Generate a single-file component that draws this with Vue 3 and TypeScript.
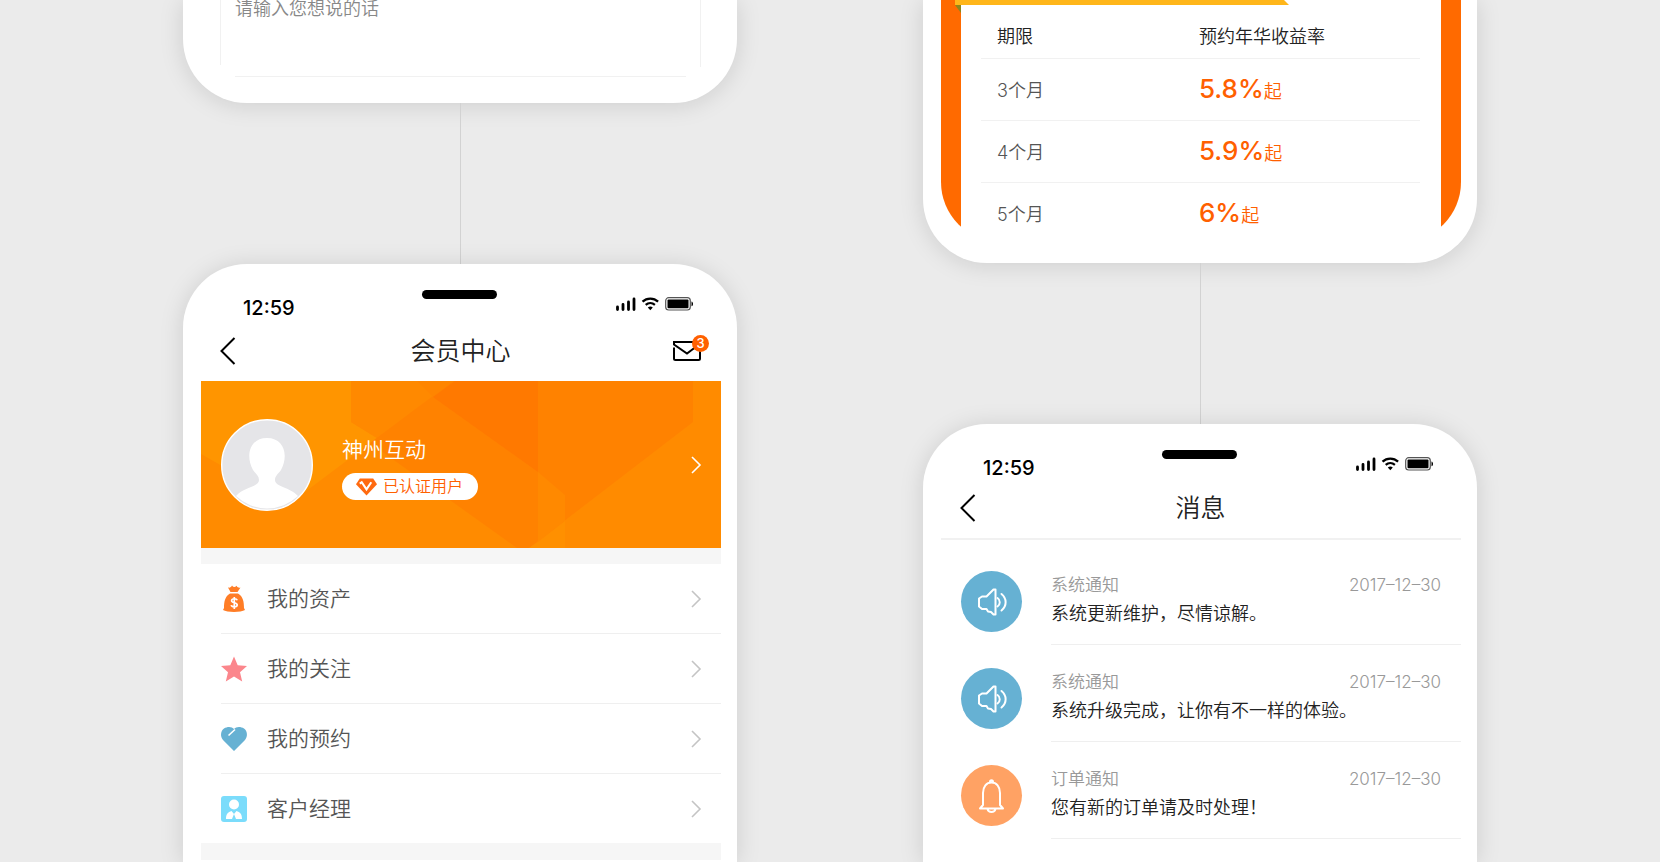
<script setup lang="ts">
interface Rate { term: string; value: string }
interface MenuItem { label: string; icon: 'bag' | 'star' | 'heart' | 'manager' }
interface Message { kind: 'system' | 'order'; title: string; text: string; date: string }

const rates: Rate[] = [
  { term: '3个月', value: '5.8%' },
  { term: '4个月', value: '5.9%' },
  { term: '5个月', value: '6%' },
]

const menu: MenuItem[] = [
  { label: '我的资产', icon: 'bag' },
  { label: '我的关注', icon: 'star' },
  { label: '我的预约', icon: 'heart' },
  { label: '客户经理', icon: 'manager' },
]

const messages: Message[] = [
  { kind: 'system', title: '系统通知', text: '系统更新维护，尽情谅解。', date: '2017–12–30' },
  { kind: 'system', title: '系统通知', text: '系统升级完成，让你有不一样的体验。', date: '2017–12–30' },
  { kind: 'order', title: '订单通知', text: '您有新的订单请及时处理！', date: '2017–12–30' },
]
</script>

<template>
  <main class="board">
    <div class="column">
      <section class="phone phone-end">
        <form class="feedback" @submit.prevent>
          <textarea class="feedback-box" aria-label="留言" placeholder="请输入您想说的话"></textarea>
        </form>
      </section>
      <div class="connector"></div>
      <section class="phone phone-start">
        <div class="status">
          <span class="clock">12:59</span>
          <span class="speaker"></span>
          <svg class="status-icons" viewBox="0 0 78 14" aria-hidden="true">
            <path d="M1.500 10v2.500M7 7.500v5M12.500 5v7.500M18 2v10.500" stroke="#000" stroke-width="2.800" stroke-linecap="round" fill="none" />
            <path d="M26.500 4.600a11.500 11.500 0 0 1 15.600 0M29.700 7.900a7 7 0 0 1 9.200 0" stroke="#000" stroke-width="2.200" fill="none" />
            <path d="M31.800 10.600a4 4 0 0 1 5 0l-2.500 2.700z" />
            <rect x="49.700" y=".7" width="24.600" height="12.300" rx="3" fill="none" stroke="#555" stroke-width="1.200" />
            <rect x="51.500" y="2.500" width="21" height="8.700" rx="1" />
            <path d="M75.500 4.500c2 .6 2 4.200 0 4.800z" />
          </svg>
        </div>
        <header class="navbar navbar-member">
          <button class="back" type="button" aria-label="返回">
            <svg viewBox="0 0 16 28"><path d="M14.500 1 1.500 14l13 13" /></svg>
          </button>
          <h1>会员中心</h1>
          <button class="mail" type="button" aria-label="消息">
            <svg viewBox="0 0 28 20"><path d="M1 6.500v11a1.500 1.500 0 0 0 1.500 1.500h23a1.500 1.500 0 0 0 1.500-1.500V2.500A1.500 1.500 0 0 0 25.500 1H1v2.500L14 12.500l8-6" /></svg>
            <span class="count">3</span>
          </button>
        </header>
        <a class="profile" href="#profile">
          <svg class="profile-art" viewBox="0 0 520 167" preserveAspectRatio="none" aria-hidden="true">
            <path fill="#ff8b00" d="M0 0h520v167H0z" />
            <path fill="#ff9500" d="M0 0h150v41l26 16-88 66L0 73z" />
            <path fill="#ff8900" d="M150 0h102l-76 57-26-16z" />
            <path fill="#ff8200" d="M252 0h240v41L328 167h-12L169 62z" />
            <path fill="#ff8500" d="M216 0h36l-20 16z" />
            <path fill="#ff7900" d="M232 16 254 0h83v91z" />
            <path fill="#ff8900" d="m337 91 27 23v26l-27 21z" />
            <path fill="#ff9000" d="m337 161 27-21v27h-36z" />
          </svg>
          <svg class="avatar" viewBox="0 0 92 92" aria-hidden="true">
            <circle cx="46" cy="46" r="45.300" fill="#e5e5e8" stroke="#fff" stroke-width="1.400" />
            <path fill="#fff" d="M15 77c8-9 23-9 23-16 0-4-3-6-6-10-8-15-3-32 14-32s22 17 14 32c-3 4-6 6-6 10 0 7 15 7 23 16a45 45 0 0 1-62 0z" />
          </svg>
          <span class="identity">
            <strong>神州互动</strong>
            <span class="verified">
              <svg viewBox="0 0 22 18" aria-hidden="true">
                <path fill="#ff6a10" d="M4 0h14l4 6-11 12L0 6z" />
                <path d="m4 5.500 2-1.500 5 7.500 5-7.500" fill="none" stroke="#fff" stroke-width="2.200" />
              </svg>
              已认证用户
            </span>
          </span>
          <svg class="chevron" viewBox="0 0 10 18" aria-hidden="true"><path d="m1 1 8 8-8 8" /></svg>
        </a>
        <ul class="menu">
          <li v-for="item in menu" :key="item.label">
            <a href="#menu">
              <svg class="menu-icon" viewBox="0 0 26 26" aria-hidden="true">
                <g v-if="item.icon === 'bag'">
                  <path fill="#ff7d26" d="M7 1.500c2 .5 3-.2 4-2 1.500 2 3 2 4.500.2C16.500 1.500 18 2 19.500 1.500L16.500 6h-7z" />
                  <path fill="#ff7d26" d="M9 7.500h8c5 3 6 8 6 14.500l1 2c-4 2.500-18 2.500-22 0l1-2C3 15.500 4 10.500 9 7.500z" />
                  <path d="M16.200 14.300c-.6-2-5.400-2.200-5.600.3-.2 2.800 5.700 1.500 5.600 4.400-.2 2.600-5.500 2.400-6 .1M13.300 11v12" stroke="#fff" stroke-width="1.700" fill="none" />
                </g>
                <path v-else-if="item.icon === 'star'" fill="#fb868c" d="m13 .5 3.700 8.700 9.300.8-7 6.200 2.200 9.300-8.200-4.900-8.200 4.900L7 16.200 0 10l9.300-.8z" />
                <g v-else-if="item.icon === 'heart'">
                  <path fill="#66b1d3" d="M13 25 2 14C-1 10.500-.5 5 3 2.500 6.500.2 11 .5 13 3c2-2.500 6.500-2.800 10-.5 3.500 2.500 4 8 1 11.500z" />
                  <path d="m7.500 9.500 6.500-6" stroke="#fff" stroke-width="1.600" fill="none" />
                </g>
                <g v-else>
                  <rect width="26" height="26" rx="3" fill="#7bdcfb" />
                  <circle cx="13" cy="8.500" r="5" fill="#fff" />
                  <path fill="#fff" d="M5 23c0-5 2-7 5.500-8l2.500 3 2.500-3c3.500 1 5.500 3 5.500 8h-6l-2-5-2 5z" />
                </g>
              </svg>
              <span class="menu-label">{{ item.label }}</span>
              <svg class="chevron" viewBox="0 0 10 18" aria-hidden="true"><path d="m1 1 8 8-8 8" /></svg>
            </a>
          </li>
        </ul>
      </section>
    </div>

    <div class="column">
      <section class="phone phone-end">
        <div class="offer">
          <div class="offer-card">
            <svg class="ribbon" viewBox="0 0 334 13" aria-hidden="true">
              <path fill="#ffb61a" d="M0 0h329l5 5H0z" />
              <path fill="#8e861c" d="M0 5h6v8z" />
            </svg>
            <table class="rates">
              <thead>
                <tr><th class="term" scope="col">期限</th><th scope="col">预约年华收益率</th></tr>
              </thead>
              <tbody>
                <tr v-for="rate in rates" :key="rate.term">
                  <td>{{ rate.term }}</td>
                  <td class="rate"><b>{{ rate.value }}</b>起</td>
                </tr>
              </tbody>
            </table>
          </div>
        </div>
      </section>
      <div class="connector"></div>
      <section class="phone phone-start">
        <div class="status">
          <span class="clock">12:59</span>
          <span class="speaker"></span>
          <svg class="status-icons" viewBox="0 0 78 14" aria-hidden="true">
            <path d="M1.500 10v2.500M7 7.500v5M12.500 5v7.500M18 2v10.500" stroke="#000" stroke-width="2.800" stroke-linecap="round" fill="none" />
            <path d="M26.500 4.600a11.500 11.500 0 0 1 15.600 0M29.700 7.900a7 7 0 0 1 9.200 0" stroke="#000" stroke-width="2.200" fill="none" />
            <path d="M31.800 10.600a4 4 0 0 1 5 0l-2.500 2.700z" />
            <rect x="49.700" y=".7" width="24.600" height="12.300" rx="3" fill="none" stroke="#555" stroke-width="1.200" />
            <rect x="51.500" y="2.500" width="21" height="8.700" rx="1" />
            <path d="M75.500 4.500c2 .6 2 4.200 0 4.800z" />
          </svg>
        </div>
        <header class="navbar navbar-messages">
          <button class="back" type="button" aria-label="返回">
            <svg viewBox="0 0 16 28"><path d="M14.500 1 1.500 14l13 13" /></svg>
          </button>
          <h1>消息</h1>
        </header>
        <ul class="messages">
          <li v-for="(message, index) in messages" :key="index">
            <span class="message-icon" :class="message.kind">
              <svg v-if="message.kind === 'system'" viewBox="0 0 30 28" aria-hidden="true">
                <path d="M18.500 1.500v25h-2L14 24l-3-.5-1.500-2.500H5L2 18.500v-8L5 8.500h4.500l7-7z" />
                <path d="M20.500 10c3 2 3 6.500 0 8.500M24.500 6c5.500 4.500 5.500 12 0 16.500" />
              </svg>
              <svg v-else viewBox="0 0 26 36" aria-hidden="true">
                <path d="M4 27V15C4 8.500 7.500 4.500 12.500 4.500S21 8.500 21 15v12l3 3.500H1zM11 4c0-2.500 3-2.500 3 0M8.500 31c1 4 7 4 8 0" />
              </svg>
            </span>
            <div class="message-body">
              <div class="message-head">
                <h2>{{ message.title }}</h2>
                <time datetime="2017-12-30">{{ message.date }}</time>
              </div>
              <p>{{ message.text }}</p>
            </div>
          </li>
        </ul>
      </section>
    </div>
  </main>
</template>

<style>
body {
  background: #ebebeb;
}
</style>

<style scoped>
.board {
  box-sizing: border-box;
  display: grid;
  grid-template-columns: repeat(2, 1fr);
  height: 100vh;
  padding: 0 90px;
  overflow: hidden;
  background: #ebebeb;
  color: #222;
  font-family: Inter, "Noto Sans CJK SC", sans-serif;
  font-weight: 350;
}
.column {
  display: flex;
  flex-direction: column;
  align-items: center;
}
.phone {
  box-sizing: border-box;
  width: 100%;
  max-width: 554px;
  padding: 0 16px 0 18px;
  background: #fff;
  box-shadow: 0 2px 24px rgba(0, 0, 0, 0.13);
}
.phone-end {
  border-radius: 0 0 64px 64px;
}
.phone-start {
  flex: 1 0 auto;
  border-radius: 64px 64px 0 0;
}
.connector {
  flex: none;
  width: 1px;
  height: 161px;
  background: #d2d2d2;
}
button {
  padding: 0;
  border: 0;
  background: none;
  cursor: pointer;
}
svg {
  display: block;
  overflow: visible;
}
a {
  color: inherit;
  text-decoration: none;
}
ul {
  margin: 0;
  padding: 0;
  list-style: none;
}
h1, h2, p {
  margin: 0;
  font-weight: 350;
}

.feedback {
  padding: 0 20px 26px 19px;
}
.feedback-box {
  box-sizing: border-box;
  display: block;
  width: 100%;
  height: 77px;
  padding: 0 15px;
  border: 0;
  outline: 0;
  resize: none;
  background:
    linear-gradient(#f1f1f1, #f1f1f1) 0 0 / 1px 65px no-repeat,
    linear-gradient(#f1f1f1, #f1f1f1) 100% 0 / 1px 67px no-repeat,
    linear-gradient(#f1f1f1, #f1f1f1) 50% 100% / calc(100% - 30px) 1px no-repeat;
  font: inherit;
  font-size: 18px;
  line-height: 18px;
}
.feedback-box::placeholder {
  color: #888;
  opacity: 1;
}

.status {
  position: relative;
  display: flex;
  justify-content: space-between;
  height: 60px;
  padding: 0 27px 0 42px;
}
.clock {
  padding-top: 32px;
  color: #000;
  font-size: 20px;
  font-weight: 500;
  line-height: 24px;
}
.speaker {
  position: absolute;
  top: 26px;
  left: 50%;
  width: 75px;
  height: 9px;
  margin-left: -39px;
  border-radius: 5px;
  background: #000;
}
.status-icons {
  width: 78px;
  height: 14px;
  margin-top: 33px;
}
.navbar {
  display: grid;
  grid-template-columns: 1fr auto 1fr;
  align-items: center;
  padding: 0 20px 0 19px;
}
.navbar-member {
  height: 54px;
  padding-bottom: 3px;
}
.navbar-messages {
  height: 48px;
  padding-bottom: 6px;
  border-bottom: 2px solid #f1f1f1;
}
.navbar h1 {
  font-size: 25px;
  line-height: 36px;
}
.back svg {
  width: 16px;
  height: 28px;
}
.back path,
.mail path {
  fill: none;
  stroke: #000;
  stroke-width: 2;
}
.back {
  justify-self: start;
}
.mail {
  position: relative;
  justify-self: end;
}
.mail svg {
  width: 28px;
  height: 20px;
}
.count {
  position: absolute;
  top: -6px;
  right: -8px;
  width: 17px;
  height: 17px;
  border-radius: 50%;
  background: #ff6000;
  color: #fff;
  font: 500 13px/17px Inter, sans-serif;
  text-align: center;
}

.profile {
  position: relative;
  display: flex;
  align-items: center;
  height: 167px;
  padding: 0 20px;
  color: #fff;
}
.profile-art {
  position: absolute;
  inset: 0;
  width: 100%;
  height: 100%;
}
.avatar {
  position: relative;
  flex: none;
  width: 92px;
  height: 92px;
}
.identity {
  position: relative;
  flex: 1;
  display: flex;
  flex-direction: column;
  align-items: flex-start;
  gap: 8px;
  margin-left: 29px;
  padding-top: 6px;
}
.identity strong {
  font-size: 21px;
  font-weight: 350;
  line-height: 30px;
}
.verified {
  display: flex;
  align-items: center;
  gap: 6px;
  padding: 0 15px 0 14px;
  border-radius: 14px;
  background: #fff;
  color: #ff6000;
  font-size: 16px;
  line-height: 27px;
}
.verified svg {
  width: 21px;
  height: 18px;
}
.chevron {
  position: relative;
  flex: none;
  width: 10px;
  height: 18px;
  fill: none;
  stroke: currentColor;
  stroke-width: 1.600;
}

.menu {
  border: solid #f6f6f6;
  border-width: 16px 0 17px;
}
.menu li {
  margin-left: 20px;
}
.menu li + li {
  border-top: 1px solid #efefef;
}
.menu a {
  display: flex;
  align-items: center;
  height: 69px;
  padding-right: 20px;
  color: #555;
}
.menu-icon {
  width: 26px;
  height: 26px;
}
.menu-label {
  flex: 1;
  margin-left: 20px;
  font-size: 21px;
  line-height: 30px;
}
.menu .chevron {
  color: #c4c4c4;
}

.offer {
  height: 242px;
  margin-bottom: 21px;
  padding: 0 20px;
  border-radius: 0 0 60px 60px;
  background: #ff6a00;
}
.offer-card {
  position: relative;
  height: 100%;
  padding: 0 21px 0 20px;
  background: #fff;
}
.ribbon {
  position: absolute;
  top: 0;
  left: -6px;
  width: 334px;
  height: 13px;
}
.rates {
  width: 100%;
  border-collapse: collapse;
  table-layout: fixed;
  font-size: 18px;
  text-align: left;
}
.rates th,
.rates td {
  height: 62px;
  box-sizing: border-box;
  padding: 3px 0 0 16px;
  line-height: 26px;
}
.rates th {
  height: 58px;
  padding-top: 16px;
  font-weight: 350;
}
.rates .term {
  width: 46%;
}
.rates td {
  border-top: 1px solid #f1f1f1;
  color: #555;
}
.rates .rate {
  color: #ff6000;
}
.rates b {
  font-size: 26px;
  font-weight: 500;
}

.messages {
  padding-top: 8px;
}
.messages li {
  display: flex;
  gap: 29px;
  height: 97px;
  padding-left: 20px;
}
.message-icon {
  display: grid;
  flex: none;
  place-items: center;
  width: 61px;
  height: 61px;
  margin-top: 23px;
  border-radius: 50%;
}
.message-icon svg {
  width: 30px;
  height: 28px;
  fill: none;
  stroke: #fff;
  stroke-width: 2;
  stroke-linejoin: round;
  stroke-linecap: round;
}
.message-icon.system {
  background: #66b1d3;
}
.message-icon.order {
  background: #ffa264;
}
.order svg {
  width: 26px;
  height: 36px;
}
.message-body {
  flex: 1;
  padding-top: 25px;
  border-bottom: 1px solid #efefef;
}
.message-head {
  display: flex;
  justify-content: space-between;
  padding-right: 20px;
  color: #999;
  line-height: 24px;
}
.message-head h2,
.message-head time {
  font-size: 17px;
}
.message-body p {
  margin-top: 4px;
  font-size: 18px;
  line-height: 26px;
}
</style>
